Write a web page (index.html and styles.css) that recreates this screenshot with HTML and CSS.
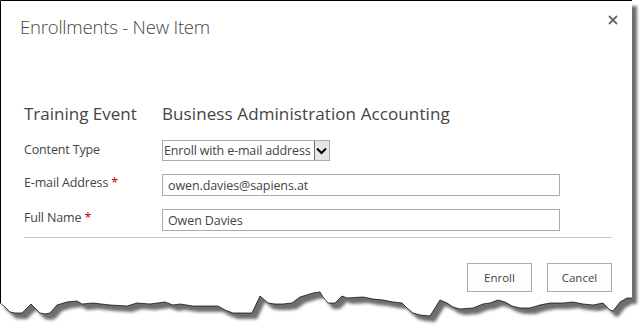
FILE: index.html
```html
<!DOCTYPE html>
<html>
<head>
<meta charset="utf-8">
<link rel="stylesheet" href="styles.css">
</head>
<body>

    <div class="sheet">
        <svg class="paper" width="640" height="326" viewBox="0 0 640 326">
            <defs>
                <filter id="blur" x="-5%" y="-5%" width="110%" height="110%"><feGaussianBlur stdDeviation="1.8"/></filter>
            </defs>
            <path class="paper-shadow" transform="translate(5 6)" filter="url(#blur)"
                d="M0,0 H632 V298 L627,298 620,302 613,311 610,310 603,303 593,305 583,304 573,302 563,303 550,303 540,305 530,308 520,308 512,306 505,302 498,300 490,303 483,304 473,308 460,309 453,307 447,303 440,300 430,316 420,315 413,313 407,308 402,303 393,302 383,300 373,299 363,297 347,298 342,296 335,303 328,303 323,297 320,292 313,293 300,297 292,303 283,304 275,304 268,303 260,296 252,313 243,313 233,313 225,310 218,306 207,306 193,306 180,304 173,305 165,302 150,304 137,303 127,306 110,305 93,303 82,304 77,301 67,302 57,305 50,313 45,314 40,313 37,310 31,304 22,313 15,313 10,312 5,307 0,303 Z"/>
            <path class="paper-face"
                d="M0,0 H632 V298 L627,298 620,302 613,311 610,310 603,303 593,305 583,304 573,302 563,303 550,303 540,305 530,308 520,308 512,306 505,302 498,300 490,303 483,304 473,308 460,309 453,307 447,303 440,300 430,316 420,315 413,313 407,308 402,303 393,302 383,300 373,299 363,297 347,298 342,296 335,303 328,303 323,297 320,292 313,293 300,297 292,303 283,304 275,304 268,303 260,296 252,313 243,313 233,313 225,310 218,306 207,306 193,306 180,304 173,305 165,302 150,304 137,303 127,306 110,305 93,303 82,304 77,301 67,302 57,305 50,313 45,314 40,313 37,310 31,304 22,313 15,313 10,312 5,307 0,303 Z"/>
            <polyline class="paper-line" points="632,0.5 0.5,0.5 0.5,303"/>
            <polyline class="paper-tear"
                points="0,303 5,307 10,312 15,313 22,313 31,304 37,310 40,313 45,314 50,313 57,305 67,302 77,301 82,304 93,303 110,305 127,306 137,303 150,304 165,302 173,305 180,304 193,306 207,306 218,306 225,310 233,313 243,313 252,313 260,296 268,303 275,304 283,304 292,303 300,297 313,293 320,292 323,297 328,303 335,303 342,296 347,298 363,297 373,299 383,300 393,302 402,303 407,308 413,313 420,315 430,316 440,300 447,303 453,307 460,309 473,308 483,304 490,303 498,300 505,302 512,306 520,308 530,308 540,305 550,303 563,303 573,302 583,304 593,305 603,303 610,310 613,311 620,302 627,298 632,298"/>
        </svg>

        <div class="dialog">
            <div class="dialog-head">
                <h1 class="dialog-title">Enrollments - New Item</h1>
                <button class="close" title="Close">
                    <svg width="10" height="10" viewBox="0 0 10 10"><path d="M1,1 L9,9 M9,1 L1,9"/></svg>
                </button>
            </div>

            <div class="form">
                <div class="row row-head">
                    <div class="label">Training Event</div>
                    <div class="value">Business Administration Accounting</div>
                </div>
                <div class="row">
                    <div class="label label-select">Content Type</div>
                    <div class="select">
                        <span class="select-text">Enroll with e-mail address</span>
                        <span class="select-arrow">
                            <svg width="11" height="8" viewBox="0 0 11 8"><path d="M1,1.5 L5.5,6 L10,1.5"/></svg>
                        </span>
                    </div>
                </div>
                <div class="row">
                    <div class="label">E-mail Address <span class="req">*</span></div>
                    <input class="field" type="text" value="owen.davies@sapiens.at">
                </div>
                <div class="row row-last">
                    <div class="label">Full Name <span class="req">*</span></div>
                    <input class="field" type="text" value="Owen Davies">
                </div>
                <hr>
                <div class="buttons">
                    <button class="btn">Enroll</button>
                    <button class="btn">Cancel</button>
                </div>
            </div>
        </div>
    </div>

</body>
</html>
```

FILE: styles.css
```css
body { margin: 0; background: #fff; font-family: "Open Sans", "Noto Sans", sans-serif; color: #444; }
.sheet { position: relative; width: 640px; height: 326px; overflow: hidden; }

/* torn paper drawn under the dialog */
.paper { position: absolute; left: 0; top: 0; }
.paper-shadow { fill: #555; opacity: .85; }
.paper-face { fill: #fff; }
.paper-line { fill: none; stroke: #000; stroke-width: 1; }
.paper-tear { fill: none; stroke: #000; stroke-width: .7; }

.dialog { position: relative; width: 632px; }

.dialog-head { display: flex; justify-content: space-between; align-items: flex-start; padding: 14px 14px 0 20px; }
.dialog-title { margin: 0; font-size: 18.5px; font-weight: 300; line-height: 25px; letter-spacing: -0.2px; color: #444; }
.close { border: 0; background: none; padding: 0; margin-top: 1px; width: 10px; height: 10px; line-height: 0; }
.close path { stroke: #6a6a6a; stroke-width: 1.8; fill: none; }

.form { padding: 63px 20px 0 24px; }
.row { display: flex; align-items: flex-start; margin-bottom: 13px; }
.row-head { margin-bottom: 14px; }
.row-last { margin-bottom: 6px; }
.label { width: 138px; flex: none; font-size: 12.5px; letter-spacing: -0.15px; line-height: 16px; padding-top: 1px; }
.label-select { padding-top: 2px; }
.req { color: #bf0000; }
.row-head .label, .row-head .value { font-size: 17px; letter-spacing: 0; line-height: 24px; padding-top: 0; }
.row-head .value { color: #444; letter-spacing: 0.1px; }

.select { display: flex; height: 21px; box-sizing: border-box; border: 1px solid #ababab; }
.select-text { font-size: 12.5px; letter-spacing: -0.15px; line-height: 19px; padding: 0 3px 0 1px; }
.select-arrow { width: 14px; margin: 0 0 0 0; background: #e6e6e6; border: 1px solid #707070; border-width: 0 0 0 1px; display: flex; align-items: center; justify-content: center; }
.select-arrow path { fill: none; stroke: #000; stroke-width: 2; }

.field { width: 398px; height: 22px; box-sizing: border-box; border: 1px solid #ababab; padding: 0 5px; margin: 0; font-family: inherit; font-size: 12.5px; letter-spacing: -0.1px; color: #444; }

hr { border: 0; border-top: 1px solid #c6c6c6; margin: 0 0 25px 0; }

.buttons { display: flex; justify-content: flex-end; gap: 15px; }
.btn { width: 65px; height: 29px; box-sizing: border-box; border: 1px solid #ababab; background: #fdfdfd; font-family: inherit; font-size: 11.5px; color: #444; padding: 0; }
```
